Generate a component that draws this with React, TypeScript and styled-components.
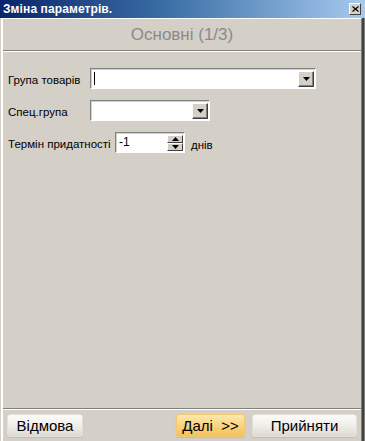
import { FunctionComponent } from 'react'
import { styled, createGlobalStyle } from 'styled-components'

const GlobalStyle = createGlobalStyle`
  html, body {
    margin: 0;
    padding: 0;
    background: #d4d0c8;
  }
  body {
    font-family: 'Liberation Sans', Arial, sans-serif;
  }
`

const Arrow: FunctionComponent<{ up?: boolean }> = ({ up }) => (
  <svg width='7' height='4' viewBox='0 0 7 4'>
    {up ? <polygon points='3.5,0 7,4 0,4' fill='#000' /> : <polygon points='0,0 7,0 3.5,4' fill='#000' />}
  </svg>
)

const App: FunctionComponent = () => {
  return (
    <Window>
      <GlobalStyle />
      <TitleBar>
        <Title>Зміна параметрів.</Title>
        <CloseButton>
          <svg width='7' height='6' viewBox='0 0 7 6'>
            <path d='M0.5 0.5 L6.5 5.5 M6.5 0.5 L0.5 5.5' stroke='#000' strokeWidth='1.2' />
          </svg>
        </CloseButton>
      </TitleBar>
      <Frame>
        <Header>Основні (1/3)</Header>
        <Body>
          <Row>
            <Label $width={82}>Група товарів</Label>
            <Combo $width={226}>
              <Caret />
              <DropButton>
                <Arrow />
              </DropButton>
            </Combo>
          </Row>
          <Row>
            <Label $width={82}>Спец.група</Label>
            <Combo $width={120}>
              <DropButton>
                <Arrow />
              </DropButton>
            </Combo>
          </Row>
          <Row>
            <Label $width={107}>Термін придатності</Label>
            <Combo $width={70}>
              <SpinValue>-1</SpinValue>
              <SpinButtons>
                <SpinButton>
                  <Arrow up />
                </SpinButton>
                <SpinButton>
                  <Arrow />
                </SpinButton>
              </SpinButtons>
            </Combo>
            <Unit>днів</Unit>
          </Row>
        </Body>
        <Footer>
          <Button $width={76}>Відмова</Button>
          <Spacer />
          <Button $width={69} $accent>
            Далі&nbsp;&nbsp;&gt;&gt;
          </Button>
          <Button $width={105}>Прийняти</Button>
        </Footer>
      </Frame>
    </Window>
  )
}
export default App

const Window = styled.div`
  width: 365px;
  height: 441px;
  display: flex;
  flex-direction: column;
  background: #d4d0c8;
  box-sizing: border-box;
  overflow: hidden;
`

const TitleBar = styled.div`
  height: 18px;
  flex: none;
  display: flex;
  align-items: center;
  justify-content: space-between;
  padding: 0 4px 0 3px;
  background: linear-gradient(to right, #0a246a 0%, #3a6ea5 45%, #a6caf0 100%);
`

const Title = styled.div`
  color: #fff;
  font-weight: bold;
  font-size: 12px;
  letter-spacing: 0.1px;
  line-height: 18px;
`

const CloseButton = styled.div`
  width: 10px;
  height: 10px;
  display: flex;
  align-items: center;
  justify-content: center;
  background: #d4d0c8;
  border-top: 1px solid #fff;
  border-left: 1px solid #fff;
  border-right: 1px solid #404040;
  border-bottom: 1px solid #404040;
  box-sizing: content-box;
`

const Frame = styled.div`
  flex: 1;
  display: flex;
  flex-direction: column;
  border-left: 2px solid #fff;
  border-right: 1px solid #808080;
  box-shadow: 2px 0 0 #404040, 4px 0 0 #808080;
  margin-right: 3px;
  margin-left: 1px;
  border-top: 1px solid #fff;
`

const Header = styled.div`
  height: 31px;
  display: flex;
  align-items: center;
  justify-content: center;
  color: #8a8a8a;
  font-size: 17px;
  border-bottom: 1px solid #808080;
  box-shadow: 0 1px 0 #fff;
`

const Body = styled.div`
  flex: 1;
  display: flex;
  flex-direction: column;
  gap: 11px;
  padding: 17px 0 0 5px;
`

const Row = styled.div`
  display: flex;
  align-items: center;
  height: 21px;
`

const Label = styled.div<{ $width: number }>`
  width: ${(p) => p.$width}px;
  flex: none;
  font-size: 11.5px;
  color: #000;
  padding-top: 2px;
`

const Combo = styled.div<{ $width: number }>`
  width: ${(p) => p.$width}px;
  height: 21px;
  box-sizing: border-box;
  display: flex;
  align-items: stretch;
  justify-content: flex-end;
  position: relative;
  background: #fff;
  border-top: 1px solid #808080;
  border-left: 1px solid #808080;
  border-right: 1px solid #fff;
  border-bottom: 1px solid #fff;
  box-shadow: inset 1px 1px 0 #d4d0c8;
  padding: 2px 1px 1px 2px;
`

const Caret = styled.span`
  position: absolute;
  left: 3px;
  top: 3px;
  width: 1px;
  height: 13px;
  background: #000;
`

const DropButton = styled.div`
  width: 16px;
  box-sizing: border-box;
  display: flex;
  align-items: center;
  justify-content: center;
  background: #d4d0c8;
  border-top: 1px solid #fff;
  border-left: 1px solid #fff;
  border-right: 1px solid #404040;
  border-bottom: 1px solid #404040;
  box-shadow: inset -1px -1px 0 #808080;
`

const SpinValue = styled.div`
  flex: 1;
  font-size: 12px;
  line-height: 15px;
  padding-left: 1px;
  color: #000;
`

const SpinButtons = styled.div`
  width: 16px;
  display: flex;
  flex-direction: column;
`

const SpinButton = styled.div`
  flex: 1;
  box-sizing: border-box;
  display: flex;
  align-items: center;
  justify-content: center;
  background: #d4d0c8;
  border-top: 1px solid #fff;
  border-left: 1px solid #fff;
  border-right: 1px solid #404040;
  border-bottom: 1px solid #404040;
`

const Unit = styled.div`
  margin-left: 6px;
  font-size: 11.5px;
  padding-top: 4px;
  color: #000;
`

const Footer = styled.div`
  display: flex;
  align-items: center;
  gap: 7px;
  padding: 5px 4px 4px 4px;
  border-top: 1px solid #808080;
  box-shadow: inset 0 1px 0 #fff;
`

const Spacer = styled.div`
  flex: 1;
`

const Button = styled.div<{ $width: number; $accent?: boolean }>`
  width: ${(p) => p.$width}px;
  height: 23px;
  box-sizing: border-box;
  display: flex;
  align-items: center;
  justify-content: center;
  font-size: 15px;
  color: #000;
  border-radius: 3px;
  border: 1px solid ${(p) => (p.$accent ? '#f0c873' : '#e2e0da')};
  background: ${(p) =>
    p.$accent
      ? 'linear-gradient(#fde7ac, #f8d27e 55%, #f3c25c)'
      : 'linear-gradient(#fbfbf9, #efeeea 50%, #dcdad3)'};
  box-shadow: 0 1px 1px #c0bdb5;
`
